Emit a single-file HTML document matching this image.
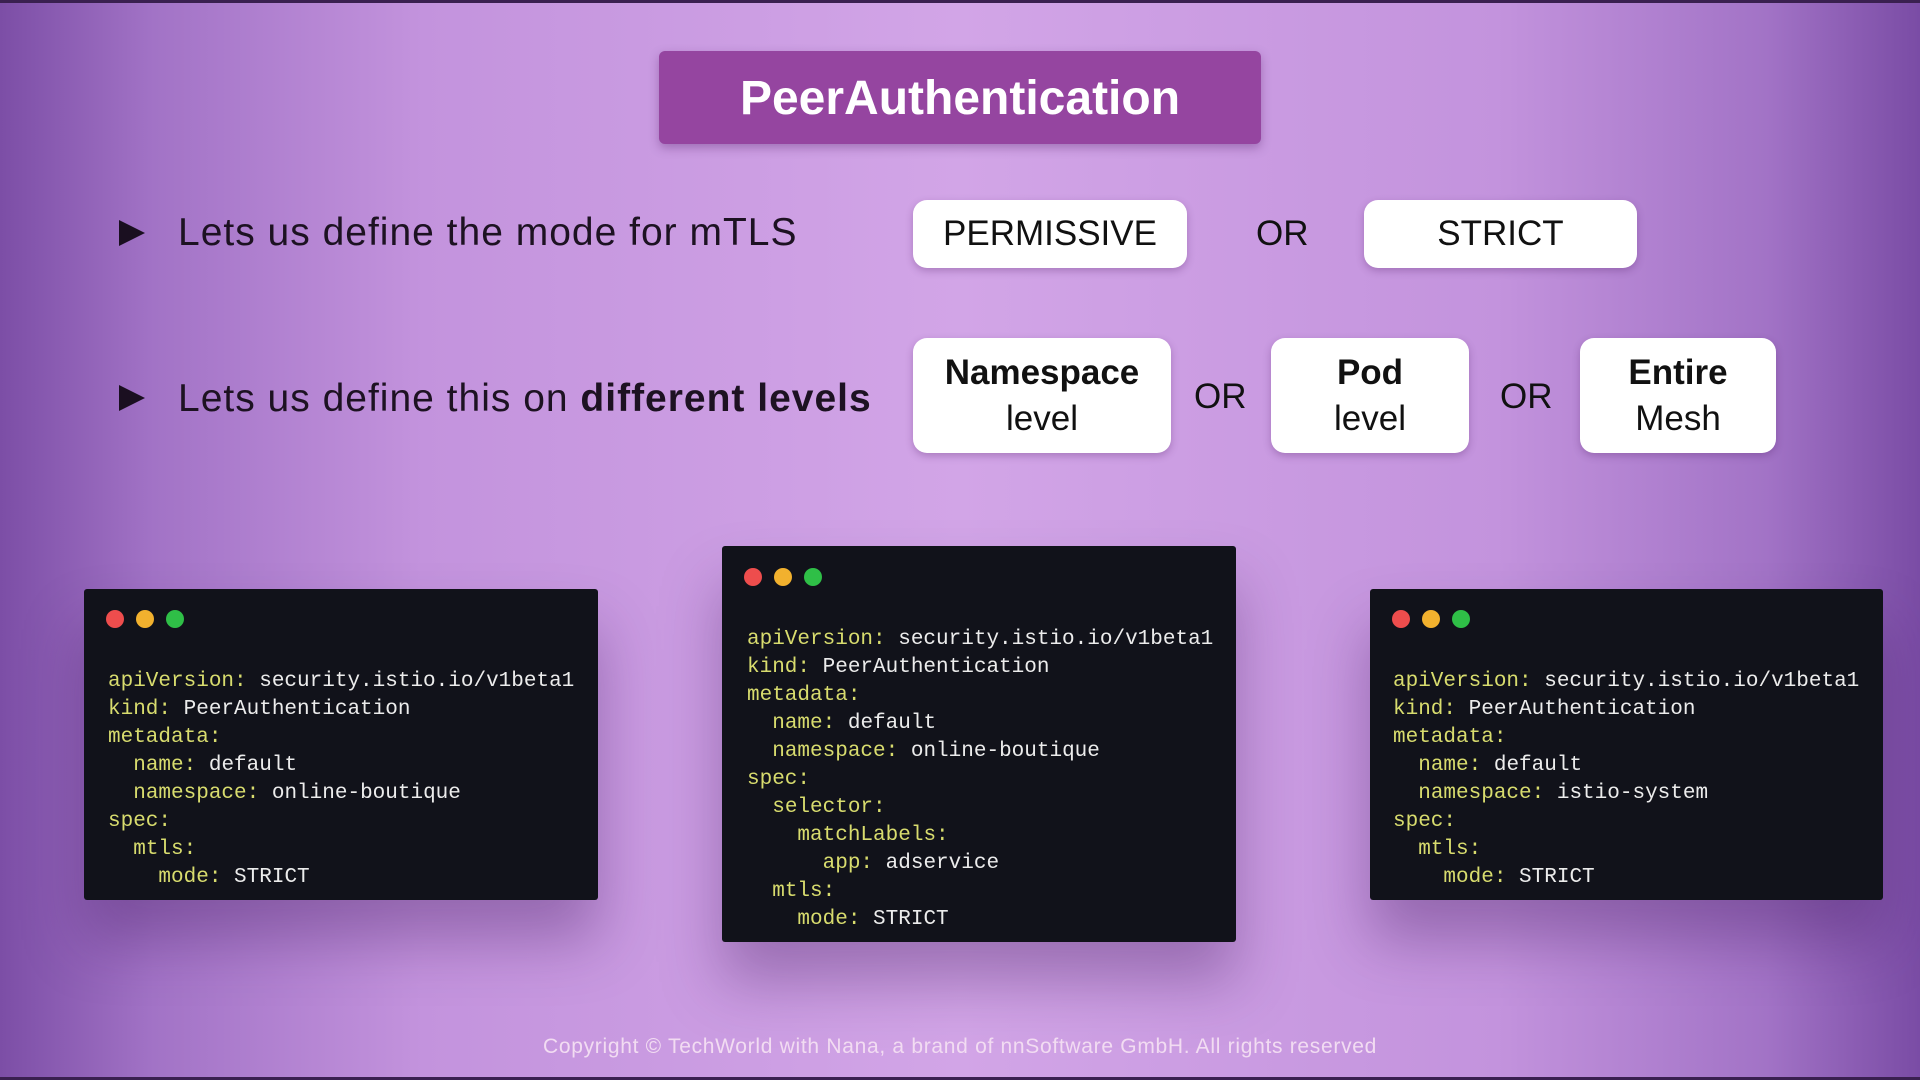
<!DOCTYPE html>
<html><head><meta charset="utf-8"><style>
*{margin:0;padding:0;box-sizing:border-box}
body{width:1920px;height:1080px;overflow:hidden;position:relative;font-family:"Liberation Sans",sans-serif;
background:linear-gradient(90deg,#7c4ea6 0%,#a273c6 8%,#c393dd 22%,#d2a5e7 50%,#c393dd 78%,#a273c6 92%,#7a4ca5 100%);}
.topline{position:absolute;left:0;top:0;width:1920px;height:3px;background:#3a2050}
.botline{position:absolute;left:0;bottom:0;width:1920px;height:3px;background:#3a2050}
.abs{position:absolute}
.title{left:659px;top:51px;width:602px;height:93px;background:#9545a0;border-radius:6px;color:#fff;font-weight:bold;font-size:48px;text-align:center;line-height:95px;box-shadow:0 4px 10px rgba(80,30,100,.35)}
.tri{width:0;height:0;border-top:13px solid transparent;border-bottom:13px solid transparent;border-left:26px solid #1a0f20}
.bl{font-size:39px;color:#1d1222;white-space:nowrap;letter-spacing:1px}
.box{background:#fff;border-radius:14px;box-shadow:0 3px 8px rgba(80,30,100,.3);color:#111;text-align:center;display:flex;align-items:center;justify-content:center;flex-direction:column;font-size:35px;line-height:46px}
.or{font-size:35px;color:#111}
.code{background:#11121a;border-radius:3px;box-shadow:0 40px 60px rgba(60,20,90,.35);font-family:"Liberation Mono",monospace;font-size:21px;line-height:28px;color:#ececec;white-space:pre}
.k{color:#d8dc6e}
.dot{position:absolute;width:18px;height:18px;border-radius:50%}
.r{background:#ee4d4d}.y{background:#f2b12e}.g{background:#2fbf47}
.foot{left:0;width:1920px;top:1035px;text-align:center;color:#f2dcf2;font-size:21px;letter-spacing:.7px}
</style></head><body>
<div class="topline"></div><div class="botline"></div>
<div class="abs title">PeerAuthentication</div>

<div class="abs tri" style="left:119px;top:220px"></div>
<div class="abs bl" style="left:178px;top:211px">Lets us define the mode for mTLS</div>
<div class="abs box" style="left:913px;top:200px;width:274px;height:68px">PERMISSIVE</div>
<div class="abs or" style="left:1256px;top:214px">OR</div>
<div class="abs box" style="left:1364px;top:200px;width:273px;height:68px">STRICT</div>

<div class="abs tri" style="left:119px;top:385px"></div>
<div class="abs bl" style="left:178px;top:377px">Lets us define this on <b>different levels</b></div>
<div class="abs box" style="left:913px;top:338px;width:258px;height:115px"><b>Namespace</b><span>level</span></div>
<div class="abs or" style="left:1194px;top:377px">OR</div>
<div class="abs box" style="left:1271px;top:338px;width:198px;height:115px"><b>Pod</b><span>level</span></div>
<div class="abs or" style="left:1500px;top:377px">OR</div>
<div class="abs box" style="left:1580px;top:338px;width:196px;height:115px"><b>Entire</b><span>Mesh</span></div>

<div class="abs code" style="left:84px;top:589px;width:514px;height:311px">
<div class="dot r" style="left:22px;top:21px"></div><div class="dot y" style="left:52px;top:21px"></div><div class="dot g" style="left:82px;top:21px"></div>
<div class="abs" style="left:24px;top:79px"><span class="k">apiVersion:</span> security.istio.io/v1beta1
<span class="k">kind:</span> PeerAuthentication
<span class="k">metadata:</span>
  <span class="k">name:</span> default
  <span class="k">namespace:</span> online-boutique
<span class="k">spec:</span>
  <span class="k">mtls:</span>
    <span class="k">mode:</span> STRICT</div></div>

<div class="abs code" style="left:722px;top:546px;width:514px;height:396px">
<div class="dot r" style="left:22px;top:22px"></div><div class="dot y" style="left:52px;top:22px"></div><div class="dot g" style="left:82px;top:22px"></div>
<div class="abs" style="left:25px;top:80px"><span class="k">apiVersion:</span> security.istio.io/v1beta1
<span class="k">kind:</span> PeerAuthentication
<span class="k">metadata:</span>
  <span class="k">name:</span> default
  <span class="k">namespace:</span> online-boutique
<span class="k">spec:</span>
  <span class="k">selector:</span>
    <span class="k">matchLabels:</span>
      <span class="k">app:</span> adservice
  <span class="k">mtls:</span>
    <span class="k">mode:</span> STRICT</div></div>

<div class="abs code" style="left:1370px;top:589px;width:513px;height:311px">
<div class="dot r" style="left:22px;top:21px"></div><div class="dot y" style="left:52px;top:21px"></div><div class="dot g" style="left:82px;top:21px"></div>
<div class="abs" style="left:23px;top:79px"><span class="k">apiVersion:</span> security.istio.io/v1beta1
<span class="k">kind:</span> PeerAuthentication
<span class="k">metadata:</span>
  <span class="k">name:</span> default
  <span class="k">namespace:</span> istio-system
<span class="k">spec:</span>
  <span class="k">mtls:</span>
    <span class="k">mode:</span> STRICT</div></div>

<div class="abs foot">Copyright © TechWorld with Nana, a brand of nnSoftware GmbH. All rights reserved</div>
</body></html>
